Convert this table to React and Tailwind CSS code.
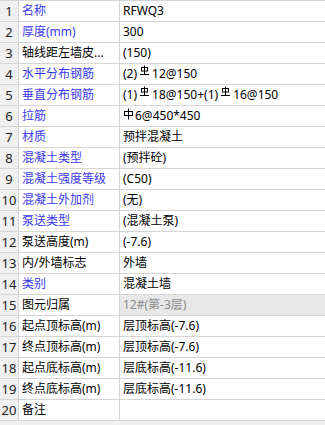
import React from "react";

// HRB400 rebar grade mark: circle-ish body with a vertical stem and a foot bar
function Grade3() {
  return (
    <svg width="11" height="12" viewBox="0 0 11 12" className="inline-block align-top mt-[1px] mx-[2px]" fill="none" stroke="#000" strokeWidth="1">
      <line x1="5.5" y1="0.5" x2="5.5" y2="9.5" />
      <rect x="2.5" y="2.5" width="6" height="3.5" />
      <line x1="1" y1="9.5" x2="10" y2="9.5" />
    </svg>
  );
}

// HPB300 rebar grade mark: box with a vertical stroke through it
function Grade1() {
  return (
    <svg width="11" height="12" viewBox="0 0 11 12" className="inline-block align-top mt-[2px] mr-[1px]" fill="none" stroke="#000" strokeWidth="1">
      <line x1="5.5" y1="0.5" x2="5.5" y2="11.5" />
      <rect x="1.5" y="3.5" width="8" height="4" />
    </svg>
  );
}

const rows = [
  { name: "名称", blue: true, value: "RFWQ3" },
  { name: "厚度(mm)", blue: true, value: "300" },
  { name: "轴线距左墙皮...", value: "(150)" },
  { name: "水平分布钢筋", blue: true, value: <>(2)<Grade3 />12@150</> },
  { name: "垂直分布钢筋", blue: true, value: <>(1)<Grade3 />18@150+(1)<Grade3 />16@150</> },
  { name: "拉筋", blue: true, value: <><Grade1 />6@450*450</> },
  { name: "材质", blue: true, value: "预拌混凝土" },
  { name: "混凝土类型", blue: true, value: "(预拌砼)" },
  { name: "混凝土强度等级", blue: true, value: "(C50)" },
  { name: "混凝土外加剂", blue: true, value: "(无)" },
  { name: "泵送类型", blue: true, value: "(混凝土泵)" },
  { name: "泵送高度(m)", value: "(-7.6)" },
  { name: "内/外墙标志", value: "外墙" },
  { name: "类别", blue: true, value: "混凝土墙" },
  { name: "图元归属", value: "12#(第-3层)", disabled: true },
  { name: "起点顶标高(m)", value: "层顶标高(-7.6)" },
  { name: "终点顶标高(m)", value: "层顶标高(-7.6)" },
  { name: "起点底标高(m)", value: "层底标高(-11.6)" },
  { name: "终点底标高(m)", value: "层底标高(-11.6)" },
  { name: "备注", value: "" },
];

export default function App() {
  return (
    <div
      className="w-[325px] h-[425px] bg-[#f0f0f0] overflow-hidden text-[12px] leading-[20px] text-black"
      style={{ fontFamily: '"Noto Sans", "Noto Sans CJK SC", sans-serif' }}
    >
      <div className="border-t border-[#d5d5d5] bg-white">
        {rows.map((r, i) => (
          <div key={i} className="flex h-[21px] border-b border-[#d5d5d5]">
            <div className="w-[19px] shrink-0 bg-[#f0f0f0] border-r border-[#d5d5d5] text-center text-[#222] text-[13px]">
              {i + 1}
            </div>
            <div
              className={`w-[101px] shrink-0 border-r border-[#d5d5d5] pl-[3px] whitespace-nowrap overflow-hidden ${
                r.blue ? "text-[#3a3af2]" : "text-black"
              }`}
            >
              {r.name}
            </div>
            <div
              className={`flex-1 pl-[3px] whitespace-nowrap overflow-hidden ${
                r.disabled ? "bg-[#e8e8e8] text-[#8a8a8a]" : ""
              }`}
            >
              {r.value}
            </div>
          </div>
        ))}
      </div>
    </div>
  );
}
